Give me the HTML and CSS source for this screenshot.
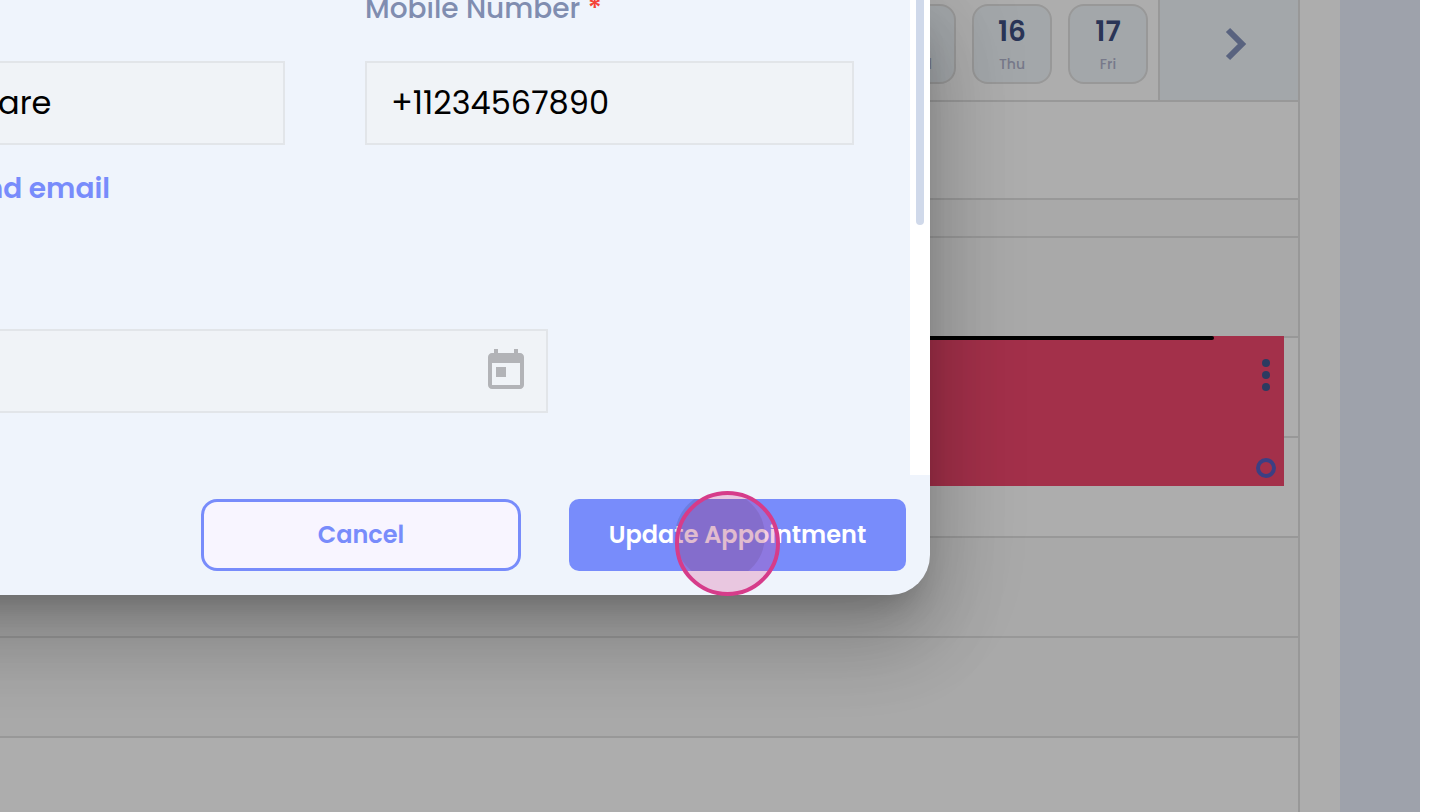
FILE: index.html
```html
<!DOCTYPE html>
<html lang="en">
<head>
<meta charset="utf-8">
<title>Update Appointment</title>
<meta name="viewport" content="width=device-width, initial-scale=1">
<link rel="stylesheet" href="styles.css">
</head>
<body>
<div class="page">
  <div class="app">
    <main class="surface">
      <section class="calendar">
        <header class="week">
          <div class="days">
            <button class="day" type="button"><span class="day-number">15</span><span class="day-name">Wed</span></button>
            <button class="day" type="button"><span class="day-number">16</span><span class="day-name">Thu</span></button>
            <button class="day" type="button"><span class="day-number">17</span><span class="day-name">Fri</span></button>
          </div>
          <button class="next" type="button" aria-label="Next week">
            <svg width="24" height="36" viewBox="0 0 24 36" aria-hidden="true"><path d="M4 4l14 14L4 32" fill="none" stroke="currentColor" stroke-width="6"/></svg>
          </button>
        </header>
        <div class="slot slot-tall"></div>
        <div class="slot slot-short slot-tinted"></div>
        <div class="slot slot-tinted"></div>
        <div class="slot">
          <article class="appointment">
            <span class="now"></span>
            <button class="menu" type="button" aria-label="Appointment menu">
              <svg width="8" height="32" viewBox="0 0 8 32" aria-hidden="true"><circle cx="4" cy="4" r="4"/><circle cx="4" cy="16" r="4"/><circle cx="4" cy="28" r="4"/></svg>
            </button>
            <span class="status"></span>
          </article>
        </div>
        <div class="slot"></div>
        <div class="slot slot-tinted"></div>
        <div class="slot slot-tinted"></div>
        <div class="slot"></div>
      </section>
    </main>
    <div class="backdrop"></div>
  </div>

  <form class="dialog" role="dialog" aria-label="Update appointment">
    <div class="scroll">
      <div class="fields">
        <div class="row">
          <div class="field">
            <span class="label"></span>
            <input class="input input-name" type="text" value="are" aria-label="Last name">
          </div>
          <div class="field">
            <label class="label" for="mobile">Mobile Number <span class="required">*</span></label>
            <input class="input" id="mobile" type="tel" value="+11234567890">
          </div>
        </div>
        <a class="link" href="#">nd email</a>
        <div class="date">
          <input class="date-input" type="text" aria-label="Date">
          <button class="date-button" type="button" aria-label="Open calendar">
            <svg width="48" height="48" viewBox="0 0 24 24" aria-hidden="true"><path d="M19 3h-1V1h-2v2H8V1H6v2H5c-1.11 0-1.99.9-1.99 2L3 19c0 1.1.89 2 2 2h14c1.1 0 2-.9 2-2V5c0-1.1-.9-2-2-2zm0 16H5V8h14v11zM7 10h5v5H7z"/></svg>
          </button>
        </div>
      </div>
      <div class="track"><div class="thumb"></div></div>
    </div>
    <footer class="actions">
      <button class="button cancel" type="button">Cancel</button>
      <button class="button update" type="submit">Update Appointment<span class="ripple"></span></button>
    </footer>
    <span class="pointer"></span>
  </form>
</div>
</body>
</html>
```

FILE: styles.css
```css
* { box-sizing: border-box; }

body {
  margin: 0;
  background: #fff;
  font-family: Poppins, Inter, "Open Sans", sans-serif;
}

button, input { font-family: inherit; margin: 0; }

button { cursor: pointer; border: 0; padding: 0; background: none; }

.page {
  position: relative;
  height: 100vh;
  padding-right: 20px;
  overflow: hidden;
}

.app {
  position: relative;
  height: 100%;
  padding-right: 80px;
  overflow: hidden;
  background: #e9effc;
}

.surface {
  padding-right: 40px;
  background: #fff;
}

.calendar { border-right: 2px solid #e1e1e1; }

.week {
  display: flex;
  justify-content: flex-end;
  border-bottom: 2px solid #e1e1e1;
}

.days {
  display: flex;
  gap: 16px;
  padding: 4px 10px 16px;
}

.day {
  display: flex;
  flex-direction: column;
  align-items: center;
  gap: 4px;
  width: 80px;
  height: 80px;
  padding-top: 8px;
  border: 2px solid #e1e1e1;
  border-radius: 16px;
  background: #f1f7fb;
}

.day-number {
  color: #3f4f80;
  font-size: 28px;
  font-weight: 600;
  line-height: 36px;
}

.day-name {
  color: #b0b3cc;
  font-size: 14px;
  font-weight: 500;
  line-height: 20px;
}

.next {
  display: flex;
  align-items: center;
  justify-content: center;
  width: 140px;
  padding: 0 0 12px 14px;
  border-left: 2px solid #e1e1e1;
  background: #f1f7fb;
  color: #8492bc;
}

.slot {
  position: relative;
  height: 100px;
  border-bottom: 2px solid #e1e1e1;
}

.slot-tall { height: 98px; }
.slot-short { height: 38px; }
.slot-tinted { background: #fafafa; }

.appointment {
  position: absolute;
  z-index: 1;
  top: -2px;
  right: 14px;
  left: 0;
  height: 150px;
  display: flex;
  flex-direction: column;
  justify-content: space-between;
  align-items: flex-end;
  padding: 23px 8px 8px;
  background: #f0486d;
}

.now {
  position: absolute;
  top: 0;
  right: 70px;
  left: 0;
  height: 4px;
  border-radius: 2px;
  background: #000;
}

.menu {
  display: flex;
  justify-content: center;
  width: 20px;
  fill: #41588f;
}

.status {
  width: 20px;
  height: 20px;
  border: 4px solid #585ec1;
  border-radius: 50%;
}

.backdrop {
  position: absolute;
  z-index: 2;
  inset: 0;
  background: rgba(0, 0, 0, 0.32);
}

.dialog {
  position: absolute;
  z-index: 3;
  top: 0;
  right: 510px;
  left: -204px;
  border-radius: 0 0 40px 0;
  background: #eff4fc;
  box-shadow:
    0 22px 30px -14px rgba(0, 0, 0, 0.2),
    0 48px 76px 6px rgba(0, 0, 0, 0.14),
    0 18px 92px 16px rgba(0, 0, 0, 0.12);
}

.scroll { display: flex; }

.fields {
  flex: 1;
  height: 475px;
  padding-right: 56px;
}

.row {
  display: grid;
  grid-template-columns: 1fr 1fr;
  gap: 80px;
}

.field {
  display: flex;
  flex-direction: column;
  min-width: 0;
}

.label {
  height: 61px;
  color: #808db0;
  font-size: 28px;
  font-weight: 500;
  line-height: 18px;
}

.required { color: #f44336; }

.input {
  width: 100%;
  height: 84px;
  padding: 0 24px;
  border: 2px solid #e2e5e9;
  border-radius: 0;
  background: #f0f3f7;
  color: #000;
  font-size: 32px;
}

.input-name { padding-left: 200px; }

.link {
  display: block;
  width: 314px;
  margin-top: 24px;
  color: #788cfb;
  font-size: 28px;
  font-weight: 600;
  line-height: 40px;
  text-align: right;
  text-decoration: none;
}

.date {
  display: flex;
  align-items: center;
  width: 752px;
  height: 84px;
  margin-top: 120px;
  padding-right: 16px;
  border: 2px solid #e2e5e9;
  background: #f0f3f7;
}

.date-input {
  flex: 1;
  min-width: 0;
  height: 100%;
  border: 0;
  background: transparent;
  font-size: 32px;
}

.date-button {
  display: flex;
  fill: #b2b3b7;
}

.track {
  width: 20px;
  padding: 0 6px;
  background: #fff;
}

.thumb {
  height: 225px;
  border-radius: 0 0 4px 4px;
  background: #d0d9ea;
}

.actions {
  display: flex;
  justify-content: flex-end;
  gap: 48px;
  padding: 24px;
}

.button {
  height: 72px;
  padding-bottom: 2px;
  font-size: 24px;
  font-weight: 600;
  white-space: nowrap;
}

.cancel {
  width: 320px;
  border: 3px solid #788cfb;
  border-radius: 16px;
  background: #f8f5ff;
  color: #788cfb;
}

.update {
  position: relative;
  width: 337px;
  overflow: hidden;
  border-radius: 10px;
  background: #788cfb;
  color: #fff;
}

.ripple {
  position: absolute;
  top: -8px;
  left: 106px;
  width: 90px;
  height: 90px;
  border-radius: 50%;
  background: rgba(0, 0, 0, 0.1);
}

.pointer {
  position: absolute;
  right: 150px;
  bottom: -1px;
  width: 105px;
  height: 105px;
  border: 4px solid #d63c8a;
  border-radius: 50%;
  background: rgba(214, 60, 138, 0.24);
  pointer-events: none;
}
```
